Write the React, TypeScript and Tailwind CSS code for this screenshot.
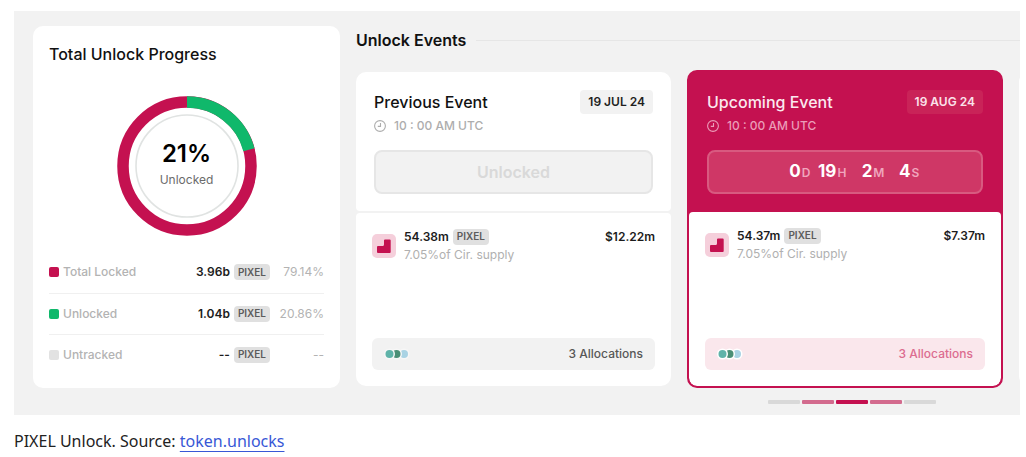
import { type ReactNode } from 'react';
import { clsx } from 'clsx';

const progressRows = [
  { label: 'Total Locked', amount: '3.96b', percent: '79.14%', color: 'bg-[#c41150]' },
  { label: 'Unlocked', amount: '1.04b', percent: '20.86%', color: 'bg-[#10b86b]' },
  { label: 'Untracked', amount: '--', percent: '--', color: 'bg-[#e2e2e2]' },
];

const countdown = [
  { value: '0', unit: 'D' },
  { value: '19', unit: 'H' },
  { value: '2', unit: 'M' },
  { value: '4', unit: 'S' },
];

const slides = [
  'bg-[#d9d9d9]',
  'bg-[#d36b8e]',
  'bg-[#c41150]',
  'bg-[#d36b8e]',
  'bg-[#d9d9d9]',
];

function TokenTag() {
  return (
    <span className="inline-flex h-4 items-center rounded bg-[#e0e0e0] px-1 text-[10px] font-semibold text-[#5c5c5c]">
      PIXEL
    </span>
  );
}

function Donut({ percent }: { percent: number }) {
  const radius = 64;
  const length = 2 * Math.PI * radius;
  const filled = (length * percent) / 100;

  return (
    <div className="grid place-items-center">
      <svg viewBox="0 0 140 140" className="col-start-1 row-start-1 size-[140px]" aria-hidden="true">
        <circle cx="70" cy="70" r={radius} fill="none" stroke="#c41150" strokeWidth="11.5" />
        <circle
          cx="70"
          cy="70"
          r={radius}
          fill="none"
          stroke="#10b86b"
          strokeWidth="11.5"
          strokeDasharray={`${filled} ${length - filled}`}
          transform="rotate(-90 70 70)"
        />
        <circle cx="70" cy="70" r="51" fill="none" stroke="#e0e3e2" strokeWidth="1.6" />
      </svg>
      <div className="col-start-1 row-start-1 flex flex-col items-center">
        <span className="text-2xl leading-7 font-semibold text-black">21%</span>
        <span className="text-xs leading-6 text-[#6b6b6b]">Unlocked</span>
      </div>
    </div>
  );
}

function ClockIcon() {
  return (
    <svg viewBox="0 0 12 12" className="size-3" fill="none" stroke="currentColor" aria-hidden="true">
      <circle cx="6" cy="6" r="5.4" strokeWidth="1.1" />
      <path d="M6.500 3v3.400H3.800" strokeWidth="1.1" />
    </svg>
  );
}

function PixelLogo() {
  return (
    <svg viewBox="0 0 24 24" className="size-6 shrink-0" aria-hidden="true">
      <rect width="24" height="24" rx="5" fill="#f5cfdb" />
      <path
        d="M13 5.500h4.700a1 1 0 0 1 1 1v11.400a1 1 0 0 1-1 1H6a1 1 0 0 1-1-1v-4.900a1 1 0 0 1 1-1h4.500a1.500 1.500 0 0 0 1.500-1.500V6.500a1 1 0 0 1 1-1z"
        fill="#c41150"
      />
    </svg>
  );
}

function AllocationDots({ halo }: { halo: string }) {
  return (
    <svg viewBox="0 0 26 12" className="h-3 w-[26px]" aria-hidden="true">
      <circle cx="20" cy="6" r="5.5" fill={halo} />
      <circle cx="20" cy="6" r="4" fill="#a9d3e4" />
      <circle cx="12.5" cy="6" r="5.5" fill={halo} />
      <circle cx="12.5" cy="6" r="4" fill="#4a8f76" />
      <circle cx="5.5" cy="6" r="5.5" fill={halo} />
      <circle cx="5.5" cy="6" r="4" fill="#5fb3a9" />
    </svg>
  );
}

interface EventCardProps {
  title: string;
  date: string;
  amount: string;
  value: string;
  upcoming?: boolean;
  children: ReactNode;
}

function EventCard({ title, date, amount, value, upcoming = false, children }: EventCardProps) {
  return (
    <article
      className={clsx(
        'flex shrink-0 flex-col overflow-hidden rounded-[10px]',
        upcoming ? 'w-[316px] border-2 border-[#c41150] bg-[#c41150]' : 'w-[315px] bg-[#f2f2f2]',
      )}
    >
      <div className={clsx('px-[18px] pt-[18px]', upcoming ? 'pb-[18px]' : 'rounded-b bg-white pb-[17px]')}>
        <div className="flex items-center justify-between">
          <h3 className={clsx('text-base font-medium', upcoming ? 'text-[#fbe9ef]' : 'text-[#111]')}>
            {title}
          </h3>
          <span
            className={clsx(
              'flex h-6 items-center rounded px-2 text-xs font-semibold',
              upcoming ? 'bg-[#c92358] text-[#fbe3eb]' : 'bg-[#f2f2f2] text-[#1f1f1f]',
            )}
          >
            {date}
          </span>
        </div>
        <p
          className={clsx(
            'mt-1 flex items-center gap-2 text-xs font-medium',
            upcoming ? 'text-[#eb9db8]' : 'text-[#adadad]',
          )}
        >
          <ClockIcon />
          10 : 00 AM UTC
        </p>
        <div className="mt-4">{children}</div>
      </div>
      <div
        className={clsx(
          'flex flex-1 flex-col justify-between bg-white p-4',
          upcoming ? 'rounded-t rounded-b-lg' : 'mt-0.5 rounded-t',
        )}
      >
        <div className="flex gap-2 text-xs">
          <div className="pt-[5px]">
            <PixelLogo />
          </div>
          <div className="flex-1">
            <div className="flex items-center gap-1 font-semibold text-[#1c1c1c]">
              {amount}
              <TokenTag />
              <span className="ml-auto">{value}</span>
            </div>
            <p className="mt-0.5 text-[#b0b0b0]">7.05%of Cir. supply</p>
          </div>
        </div>
        <button
          type="button"
          className={clsx(
            'flex h-8 items-center justify-between rounded-md px-3 text-xs font-medium',
            upcoming ? 'bg-[#fae7ec] text-[#dc6c90]' : 'bg-[#f2f2f2] text-[#575757]',
          )}
        >
          <AllocationDots halo={upcoming ? '#ffffff' : '#f7f7f7'} />
          3 Allocations
        </button>
      </div>
    </article>
  );
}

export default function App() {
  return (
    <main className="bg-white pt-[11px] pr-1.5 pl-3.5 font-['Inter',sans-serif]">
      <figure>
        <div className="flex gap-4 overflow-hidden bg-[#f2f2f2] pt-[15px] pb-[11px] pl-[19px]">
          <section className="mb-4 w-[307px] shrink-0 rounded-[10px] bg-white px-4 pt-4 pb-3">
            <h2 className="text-base font-medium text-[#111]">Total Unlock Progress</h2>
            <div className="mt-[30px] mb-4">
              <Donut percent={20.86} />
            </div>
            <table className="w-full text-xs">
              <tbody>
                {progressRows.map((row) => (
                  <tr key={row.label} className="h-[41px] border-b border-[#f0f0f0] last:border-b-0">
                    <th scope="row" className="text-left font-medium text-[#b3b3b3]">
                      <span className="flex items-center gap-1">
                        <span className={clsx('size-2.5 rounded-xs', row.color)} />
                        {row.label}
                      </span>
                    </th>
                    <td className="font-semibold text-[#1c1c1c]">
                      <span className="flex items-center justify-end gap-1">
                        {row.amount}
                        <TokenTag />
                      </span>
                    </td>
                    <td className="w-[54px] text-right text-[#b3b3b3]">{row.percent}</td>
                  </tr>
                ))}
              </tbody>
            </table>
          </section>

          <section className="flex min-w-0 flex-1 flex-col">
            <div className="mt-0.5 flex items-center gap-2.5">
              <h2 className="text-base font-semibold text-[#111]">Unlock Events</h2>
              <div className="h-px flex-1 bg-[#e6e6e6]" />
            </div>
            <div className="mt-[18px] flex h-[318px] gap-4">
              <div className="flex py-0.5">
                <EventCard title="Previous Event" date="19 JUL 24" amount="54.38m" value="$12.22m">
                  <button
                    type="button"
                    disabled
                    className="h-11 w-full rounded-lg border-2 border-[#e6e6e6] bg-[#f2f2f2] text-base font-semibold text-[#d9d9d9]"
                  >
                    Unlocked
                  </button>
                </EventCard>
              </div>
              <EventCard title="Upcoming Event" date="19 AUG 24" amount="54.37m" value="$7.37m" upcoming>
                <div className="flex h-11 items-center justify-center gap-1 rounded-lg border-2 border-[#d85a80] bg-[#cf3766] pl-2">
                  {countdown.map(({ value, unit }) => (
                    <span key={unit} className="flex items-baseline gap-px">
                      <span className="w-[22px] text-right text-[17px] font-bold text-white">{value}</span>
                      <span className="text-xs font-semibold text-[#f0a5bd]">{unit}</span>
                    </span>
                  ))}
                </div>
              </EventCard>
              <div className="my-0.5 w-[315px] shrink-0 rounded-[10px] bg-white" />
            </div>
            <div className="mt-3 flex justify-end gap-0.5 pr-[84px]">
              {slides.map((color, i) => (
                <button
                  key={i}
                  type="button"
                  aria-label={`Slide ${i + 1}`}
                  className={clsx('h-1 w-8 rounded-[1px]', color)}
                />
              ))}
            </div>
          </section>
        </div>
        <figcaption className="py-3.5 font-['Noto_Sans',sans-serif] text-base text-[#222]">
          PIXEL Unlock. Source:{' '}
          <a href="#" className="text-[#3858d6] underline decoration-1 underline-offset-4">
            token.unlocks
          </a>
        </figcaption>
      </figure>
    </main>
  );
}
